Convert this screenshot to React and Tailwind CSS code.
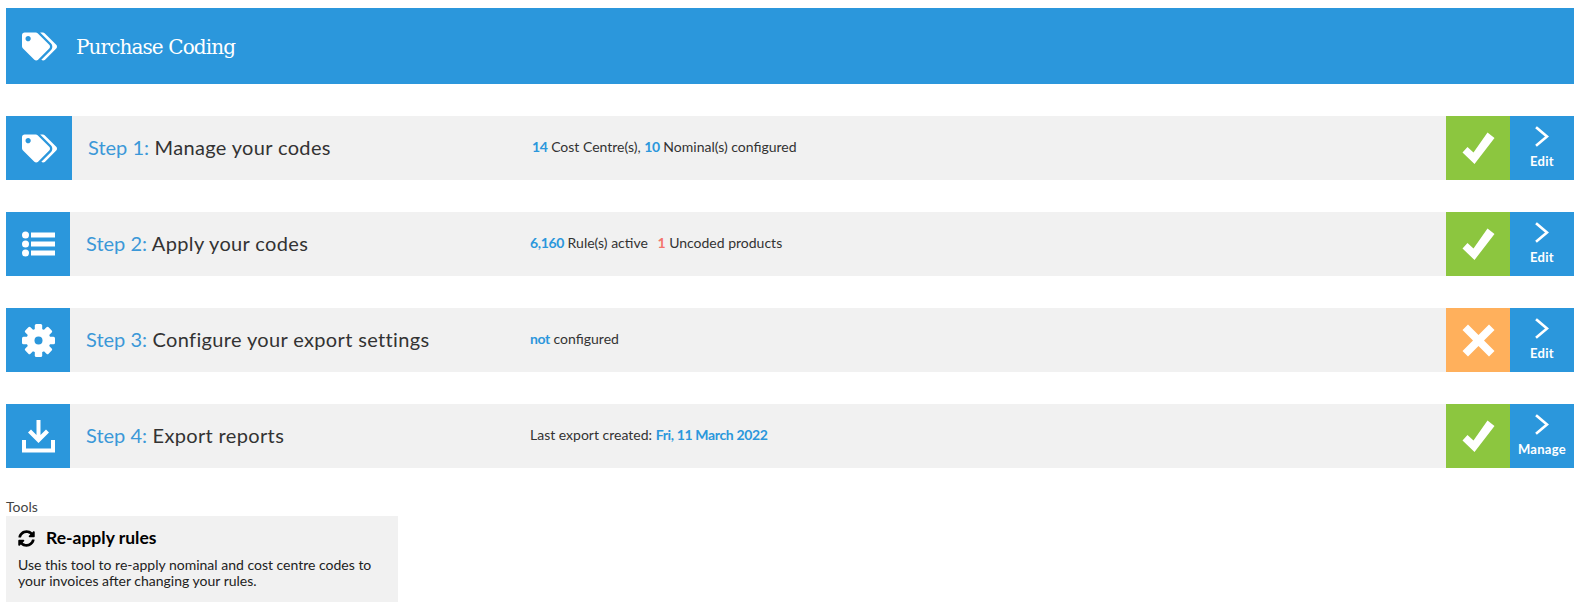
import React from "react";
import { FaTags, FaSyncAlt } from "react-icons/fa";

const Tags = () => <FaTags className="w-[35px] h-[35px] text-white" />;
const ListIcon = () => (
  <svg width="33" height="26" viewBox="0 0 33 26" fill="#fff">
    <circle cx="3.5" cy="4" r="3.5" />
    <circle cx="3.5" cy="13" r="3.5" />
    <circle cx="3.5" cy="22" r="3.5" />
    <rect x="9" y="1.5" width="24" height="5" />
    <rect x="9" y="10.5" width="24" height="5" />
    <rect x="9" y="19.5" width="24" height="5" />
  </svg>
);
const Gear = () => (
  <svg width="33" height="33" viewBox="0 0 33 33" fill="#fff">
    {[0, 45, 90, 135, 180, 225, 270, 315].map((a) => (
      <rect key={a} x="12.8" y="0" width="7.4" height="10" rx="1.5" transform={`rotate(${a} 16.5 16.5)`} />
    ))}
    <circle cx="16.5" cy="16.5" r="12" />
    <circle cx="16.5" cy="16.5" r="4" fill="#2b97dc" />
  </svg>
);
const Download = () => (
  <svg width="33" height="33" viewBox="0 0 33 33" fill="#fff">
    <path d="M14.500 0h4v15l5.500-5.500 3 3L16.500 23 6 12.500l3-3 5.500 5.500z" />
    <path d="M0 20h4v8.500h25V20h4v12.500H0z" />
  </svg>
);
const Check = () => (
  <svg width="33" height="33" viewBox="0 0 33 33" fill="#fff">
    <path d="M25.500 0.500 32.500 6 12.500 32 0.500 20.500 5.500 15 11.500 20.500z" />
  </svg>
);
const Cross = () => (
  <svg width="33" height="33" viewBox="0 0 33 33" fill="#fff">
    <path d="M6 0.500 16.500 11 27 0.500 32.500 6 22 16.500 32.500 27 27 32.500 16.500 22 6 32.500 0.500 27 11 16.500 0.500 6z" />
  </svg>
);
const Chevron = () => (
  <svg width="14" height="21" viewBox="0 0 14 21" fill="none" stroke="#fff" strokeWidth="2.600" strokeLinecap="square">
    <path d="M2 2l10 8.500L2 19" />
  </svg>
);

function B({ children, red }) {
  return <b className={red ? "font-bold text-[#f4736b]" : "font-bold text-[#2b97dc] tracking-[-0.35px]"}>{children}</b>;
}

function Row({ icon, iconW, pad, step, title, info, ok, action, infoLeft }) {
  return (
    <div className="flex h-16 mb-8 bg-[#f1f1f1]">
      <div className={`${iconW} shrink-0 bg-[#2b97dc] flex items-center justify-center`}>{icon}</div>
      <div className={`${pad} w-[440px] shrink-0 text-[20px] leading-[62px] text-[#333] tracking-[0.35px]`}>
        <span className="text-[#3b98d8] tracking-[0px]">Step {step}:</span> {title}
      </div>
      <div className={`${infoLeft} flex-1 text-[14px] leading-[62px] text-[#333]`}>{info}</div>
      <div className={`${ok ? "bg-[#8cc63f]" : "bg-[#ffb05c]"} w-16 shrink-0 flex items-center justify-center`}>
        {ok ? <Check /> : <Cross />}
      </div>
      <div className="w-16 shrink-0 bg-[#2b97dc] flex flex-col items-center pt-[10px] text-white text-[13px] font-bold tracking-[0.3px] leading-[16px]">
        <Chevron />
        <span className="mt-[6px]">{action}</span>
      </div>
    </div>
  );
}

export default function App() {
  return (
    <div className="pt-2 pl-[6px] pr-2 bg-white h-[613px] overflow-hidden font-['Lato','Noto_Sans',sans-serif]">
      <div className="h-[76px] bg-[#2b97dc] flex items-center pl-[16px] mb-8">
        <Tags />
        <h1 className="ml-[19px] mt-[1px] text-[20px] text-white font-['DejaVu_Serif',serif] tracking-[-0.9px]">Purchase Coding</h1>
      </div>
      <Row icon={<Tags />} iconW="w-[66px]" pad="pl-[16px]" step="1" title="Manage your codes" ok action="Edit" infoLeft="pl-[20px]"
        info={<><B>14</B> Cost Centre(s), <B>10</B> Nominal(s) configured</>} />
      <Row icon={<ListIcon />} iconW="w-16" pad="pl-[16px]" step="2" title="Apply your codes" ok action="Edit" infoLeft="pl-[20px]"
        info={<><B>6,160</B> Rule(s) active <span className="ml-[6px]"><B red>1</B></span> Uncoded products</>} />
      <Row icon={<Gear />} iconW="w-16" pad="pl-[16px]" step="3" title="Configure your export settings" ok={false} action="Edit" infoLeft="pl-[20px]"
        info={<><B>not</B> configured</>} />
      <Row icon={<Download />} iconW="w-16" pad="pl-[16px]" step="4" title="Export reports" ok action="Manage" infoLeft="pl-[20px]"
        info={<>Last export created: <B>Fri, 11 March 2022</B></>} />
      <div className="mt-[-2px] text-[14px] leading-[18px] text-[#444]">Tools</div>
      <div className="w-[392px] h-[86px] bg-[#f1f1f1] px-3 pt-[10px]">
        <div className="flex items-center gap-[11px] text-[17.5px] font-bold text-black leading-[24px]">
          <FaSyncAlt className="w-[17px] h-[17px]" />
          Re-apply rules
        </div>
        <p className="mt-[7px] text-[14px] leading-[16px] text-[#222]">
          Use this tool to re-apply nominal and cost centre codes to your invoices after changing your rules.
        </p>
      </div>
    </div>
  );
}
